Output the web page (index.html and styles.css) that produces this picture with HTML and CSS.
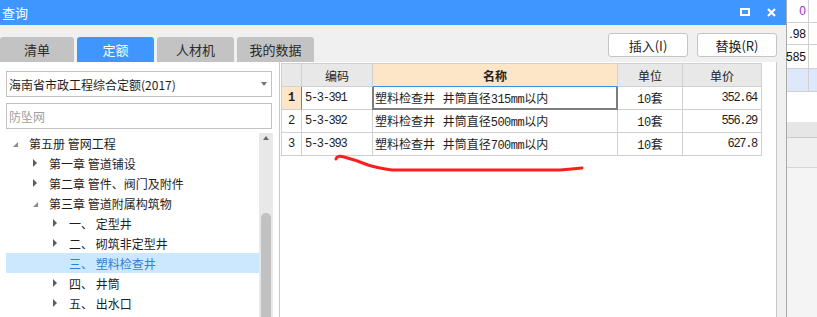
FILE: index.html
```html
<!DOCTYPE html>
<html lang="zh-CN">

<head>
    <meta charset="UTF-8">
    <meta name="viewport" content="width=device-width, initial-scale=1.0">
    <title>查询</title>
    <link rel="stylesheet" href="styles.css">
</head>

<body>
    <div class="screen">
        <div class="dialog">
            <div class="titlebar">
                <span class="title">查询</span>
                <div class="winbtns">
                    <span class="maxbox"></span>
                    <svg width="9" height="9" viewBox="0 0 9 9">
                        <path d="M1 1 L8 8 M8 1 L1 8" stroke="#fff" stroke-width="2.2" />
                    </svg>
                </div>
            </div>

            <div class="toolbar">
                <div class="tabs">
                    <div class="tab first">清单</div>
                    <div class="tab on">定额</div>
                    <div class="tab">人材机</div>
                    <div class="tab">我的数据</div>
                </div>
                <div class="actions">
                    <div class="btn">插入(I)</div>
                    <div class="btn">替换(R)</div>
                </div>
            </div>

            <div class="main">
                <!-- 左侧 定额库 + 章节树 -->
                <div class="left">
                    <div class="combo">
                        <span>海南省市政工程综合定额(2017)</span>
                        <i class="caret"></i>
                    </div>
                    <div class="search">防坠网</div>
                    <div class="tree">
                        <div class="nodes">
                            <div class="node"><span class="tw"><i class="open"></i></span>第五册 管网工程</div>
                            <div class="node l1"><span class="tw"><i class="shut"></i></span>第一章 管道铺设</div>
                            <div class="node l1"><span class="tw"><i class="shut"></i></span>第二章 管件、阀门及附件</div>
                            <div class="node l1"><span class="tw"><i class="open"></i></span>第三章 管道附属构筑物</div>
                            <div class="node l2"><span class="tw"><i class="shut"></i></span>一、 定型井</div>
                            <div class="node l2"><span class="tw"><i class="shut"></i></span>二、 砌筑非定型井</div>
                            <div class="node l2 sel"><span class="tw"></span>三、 塑料检查井</div>
                            <div class="node l2"><span class="tw"><i class="shut"></i></span>四、 井筒</div>
                            <div class="node l2"><span class="tw"><i class="shut"></i></span>五、 出水口</div>
                        </div>
                        <div class="vbar">
                            <i class="up"></i>
                            <div class="thumb"></div>
                        </div>
                    </div>
                </div>

                <!-- 右侧 定额子目表 -->
                <div class="panel">
                    <div class="grid">
                        <div class="c h"></div>
                        <div class="c h">编码</div>
                        <div class="c h sel">名称</div>
                        <div class="c h">单位</div>
                        <div class="c h">单价</div>

                        <div class="c rn sel">1</div>
                        <div class="c code">5-3-391</div>
                        <div class="c name cur">塑料检查井 井筒直径<span class="n">315mm</span>以内</div>
                        <div class="c unit"><span class="n">10</span>套</div>
                        <div class="c price">352.64</div>

                        <div class="c rn">2</div>
                        <div class="c code">5-3-392</div>
                        <div class="c name">塑料检查井 井筒直径<span class="n">500mm</span>以内</div>
                        <div class="c unit"><span class="n">10</span>套</div>
                        <div class="c price">556.29</div>

                        <div class="c rn">3</div>
                        <div class="c code">5-3-393</div>
                        <div class="c name">塑料检查井 井筒直径<span class="n">700mm</span>以内</div>
                        <div class="c unit"><span class="n">10</span>套</div>
                        <div class="c price">627.8</div>
                    </div>
                </div>
            </div>
        </div>

        <!-- 后面露出的表格 -->
        <div class="sheet">
            <div class="sr r1"><span class="purple">0</span></div>
            <div class="sr r2"><span>.98</span></div>
            <div class="sr r3"><span>585</span></div>
            <div class="sr r4"><span></span></div>
            <div class="blank"></div>
            <div class="band"></div>
            <div class="band2"></div>
            <div class="rest"></div>
        </div>

        <svg class="mark" width="817" height="317">
            <path d="M336 159 Q337 155 344 157 Q356 160 368 165 Q378 168 392 170 L560 170 Q572 169 582 168" />
        </svg>
    </div>
</body>

</html>
```

FILE: styles.css
```css
* {
    box-sizing: border-box;
}

body {
    margin: 0;
    font-family: "Noto Sans CJK SC", sans-serif;
    font-size: 12px;
    color: #1e1e1e;
}

.screen {
    position: relative;
    display: flex;
    width: 817px;
    height: 317px;
    overflow: hidden;
    background: #fff;
}

.dialog {
    width: 787px;
    display: flex;
    flex-direction: column;
    background: #f0f0f0;
    border-right: 1px solid #a9a9a9;
}

.titlebar {
    height: 25px;
    flex: none;
    display: flex;
    align-items: center;
    padding-left: 2px;
    background: #4096ff;
    color: #fff;
    font-size: 13px;
}

.title {
    flex: 1;
}

.winbtns {
    display: flex;
    align-items: center;
    gap: 17px;
    padding-right: 10px;
}

.maxbox {
    width: 10px;
    height: 8px;
    border: 2px solid #fff;
    margin-top: -2px;
}

/* 页签 + 按钮 */
.toolbar {
    height: 37px;
    flex: none;
    display: flex;
    justify-content: space-between;
    padding-right: 9px;
}

.tabs {
    display: flex;
    gap: 3px;
    align-self: flex-end;
}

.tab {
    width: 77px;
    height: 25px;
    display: flex;
    align-items: center;
    justify-content: center;
    background: #c3c3c3;
    border-radius: 3px 3px 0 0;
    font-size: 13px;
    color: #2a2a2a;
}

.tab.first {
    width: 74px;
}

.tab.on {
    background: #4096ff;
    color: #fff;
}

.actions {
    display: flex;
    gap: 9px;
    margin-top: 8px;
}

.btn {
    width: 80px;
    height: 24px;
    display: flex;
    align-items: center;
    justify-content: center;
    background: #fff;
    border: 1px solid #c4c4c4;
    border-radius: 3px;
    font-size: 13px;
    color: #222;
}

.main {
    flex: 1;
    min-height: 0;
    display: flex;
    padding-right: 9px;
}

/* 左侧 */
.left {
    width: 279px;
    display: flex;
    flex-direction: column;
    background: #fff;
    padding: 9px 6px 0 6px;
}

.combo,
.search {
    height: 26px;
    flex: none;
    display: flex;
    align-items: center;
    margin-right: 1px;
    border: 1px solid #c2c2c2;
    padding: 0 4px 0 2px;
}

.combo {
    justify-content: space-between;
}

.caret {
    width: 0;
    border: 3px solid transparent;
    border-top: 4px solid #777;
    border-bottom: 0;
}

.search {
    margin-top: 6px;
    color: #a0a0a0;
}

.tree {
    flex: 1;
    min-height: 0;
    display: flex;
    margin-top: 4px;
}

.nodes {
    flex: 1;
}

.node {
    height: 20px;
    display: flex;
    align-items: center;
    white-space: nowrap;
}

.node.l1 {
    padding-left: 20px;
}

.node.l2 {
    padding-left: 40px;
}

.node.sel {
    background: #cce8ff;
    color: #2f7fd6;
}

.tw {
    width: 23px;
    flex: none;
    display: flex;
    align-items: center;
}

.shut {
    margin-left: 7px;
    border-left: 4px solid #5e5e5e;
    border-top: 4px solid transparent;
    border-bottom: 4px solid transparent;
}

.open {
    margin: 3px 0 0 7px;
    border-right: 5px solid #8a8a8a;
    border-top: 5px solid transparent;
}

.vbar {
    width: 14px;
    display: flex;
    flex-direction: column;
    align-items: center;
    background: #e8e8e8;
}

.up {
    margin-top: 3px;
    border-bottom: 4px solid #6a6a6a;
    border-left: 3.5px solid transparent;
    border-right: 3.5px solid transparent;
}

.thumb {
    flex: 1;
    width: 10px;
    margin-top: 73px;
    background: #c1c1c1;
    border-radius: 5px 5px 0 0;
}

/* 右侧表格 */
.panel {
    width: 498px;
    background: #fff;
    border-left: 1px solid #c9c9c9;
    border-right: 1px solid #c9c9c9;
    padding: 1px 0 0 1px;
}

.grid {
    display: grid;
    grid-template-columns: 20px 71px 245px 65px 79px;
    grid-auto-rows: 23px;
    width: max-content;
    border-left: 1px solid #d0d0d0;
    border-top: 1px solid #d0d0d0;
}

.c {
    display: flex;
    align-items: center;
    padding: 0 3px;
    white-space: nowrap;
    overflow: hidden;
    border-right: 1px solid #d0d0d0;
    border-bottom: 1px solid #d0d0d0;
}

.h {
    justify-content: center;
    background: #e8e8e8;
    color: #222;
}

.h.sel {
    background: #fde6c8;
    font-weight: bold;
    border-bottom-color: #3b8de8;
}

.rn {
    justify-content: center;
    padding: 0;
    font-family: "Liberation Mono", monospace;
    font-size: 12px;
}

.rn.sel {
    background: #fde6c8;
    font-weight: bold;
    border-right-color: #3b8de8;
}

.code,
.price {
    font-family: "Liberation Mono", monospace;
    font-size: 12px;
    letter-spacing: -1.3px;
}

.price {
    justify-content: flex-end;
    padding-right: 4px;
}

.name,
.unit {
    display: block;
    line-height: 22px;
}

.name {
    padding-left: 2px;
    word-spacing: 5px;
}

.unit {
    text-align: center;
}

.n {
    font-family: "Liberation Mono", monospace;
    font-size: 12px;
    letter-spacing: -0.5px;
    word-spacing: 0;
}

.cur {
    border-right-color: #7d7d7d;
    border-bottom-color: #7d7d7d;
    box-shadow: -1px 0 0 #7d7d7d, inset 1px 0 #7d7d7d, inset -1px 0 #7d7d7d, inset 0 -1px #7d7d7d;
}

/* 背后的表格 */
.sheet {
    flex: 1;
    display: flex;
    flex-direction: column;
    font-family: "Liberation Sans", sans-serif;
    font-size: 12px;
    color: #111;
}

.sr {
    display: flex;
    flex: none;
    border-bottom: 1px solid #d0d0d0;
}

.sr span {
    width: 22px;
    display: flex;
    align-items: center;
    justify-content: flex-end;
    padding-right: 2px;
    border-right: 1px solid #d0d0d0;
}

.r1 {
    height: 23px;
}

.r2 {
    height: 22px;
}

.r3 {
    height: 24px;
}

.r4 {
    height: 23px;
    background: #dde9fb;
}

.purple {
    color: #a030c8;
}

.blank {
    height: 30px;
    flex: none;
}

.band {
    height: 16px;
    flex: none;
    background: #e6e6e6;
    border-bottom: 1px solid #c9c9c9;
}

.band2 {
    height: 30px;
    flex: none;
    background: #f0f0f0;
    border-bottom: 1px solid #d6d6d6;
}

.rest {
    flex: 1;
    background: #f4f4f4;
}

.mark {
    position: absolute;
    left: 0;
    top: 0;
    pointer-events: none;
}

.mark path {
    fill: none;
    stroke: #ff1e1e;
    stroke-width: 3px;
    stroke-linecap: round;
    stroke-linejoin: round;
}
```
